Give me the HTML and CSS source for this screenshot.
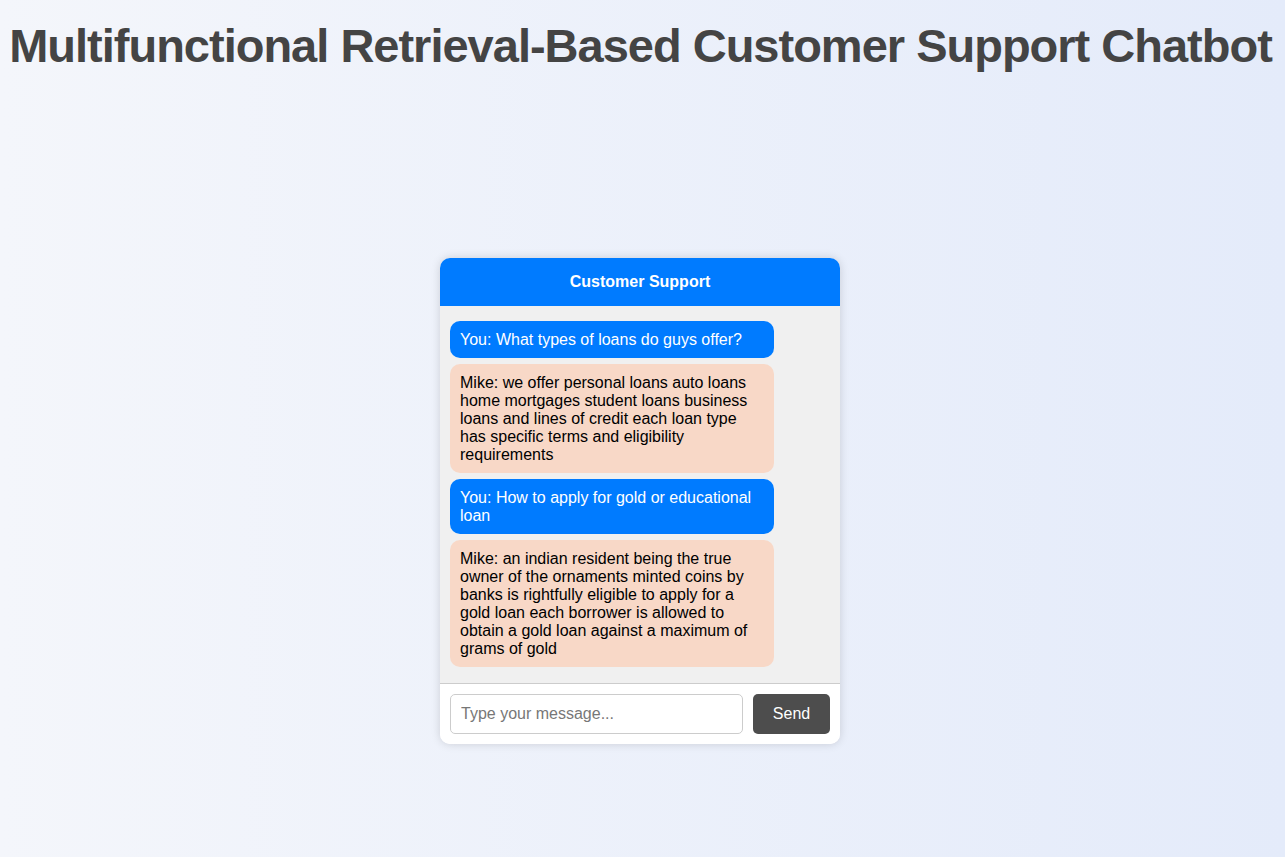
FILE: index.html
```html
<!DOCTYPE html>
<html lang="en">
<head>
<meta charset="utf-8">
<title>Customer Support Chatbot</title>
<link rel="stylesheet" href="styles.css">
</head>
<body>
<h1 class="page-title">Multifunctional Retrieval-Based Customer Support Chatbot</h1>
<main class="stage">
  <section class="chat">
    <header class="chat-header">Customer Support</header>
    <div class="chat-messages">
      <div class="msg msg-user">You: What types of loans do guys offer?</div>
      <div class="msg msg-bot">Mike: we offer personal loans auto loans home mortgages student loans business loans and lines of credit each loan type has specific terms and eligibility requirements</div>
      <div class="msg msg-user">You: How to apply for gold or educational loan</div>
      <div class="msg msg-bot">Mike: an indian resident being the true owner of the ornaments minted coins by banks is rightfully eligible to apply for a gold loan each borrower is allowed to obtain a gold loan against a maximum of grams of gold</div>
    </div>
    <form class="chat-input">
      <input class="chat-field" type="text" placeholder="Type your message...">
      <button class="chat-send" type="button">Send</button>
    </form>
  </section>
</main>
</body>
</html>
```

FILE: styles.css
```css
html, body {
  margin: 0;
  padding: 0;
}
body {
  min-height: 100vh;
  font-family: "Liberation Sans", Arial, sans-serif;
  background: linear-gradient(to right, #f4f6fb, #e4ebfa);
}
.page-title {
  margin: 18px 0 0;
  padding-right: 4px;
  text-align: center;
  white-space: nowrap;
  font-size: 47px;
  line-height: 55px;
  letter-spacing: -1px;
  font-weight: bold;
  color: #444;
}
.stage {
  display: flex;
  justify-content: center;
  padding-top: 185px;
  padding-right: 5px;
}
.chat {
  width: 400px;
  background: #fff;
  border-radius: 10px;
  box-shadow: 0 0 10px rgba(0, 0, 0, 0.15);
  overflow: hidden;
}
.chat-header {
  background: #007bff;
  color: #fff;
  height: 48px;
  display: flex;
  align-items: center;
  justify-content: center;
  font-weight: bold;
  font-size: 16px;
}
.chat-messages {
  background: #f0f0f0;
  padding: 15px 10px 16px;
  display: flex;
  flex-direction: column;
  gap: 6px;
  border-bottom: 1px solid #ccc;
}
.msg {
  max-width: 304px;
  padding: 9.5px 10px;
  border-radius: 10px;
  font-size: 16px;
  line-height: 18px;
}
.msg-user {
  background: #007bff;
  color: #fff;
}
.msg-bot {
  background: #f8d8c7;
  color: #000;
}
.chat-input {
  margin: 0;
  padding: 10px;
  display: flex;
  gap: 10px;
  background: #fff;
}
.chat-field {
  flex: 1;
  height: 40px;
  box-sizing: border-box;
  border: 1px solid #ccc;
  border-radius: 5px;
  padding: 0 10px;
  font-family: "Liberation Sans", Arial, sans-serif;
  font-size: 16px;
  color: #000;
}
.chat-field::placeholder {
  color: #777;
}
.chat-send {
  width: 77px;
  height: 40px;
  border: none;
  border-radius: 5px;
  background: #4d4d4d;
  color: #fff;
  font-family: "Liberation Sans", Arial, sans-serif;
  font-size: 16px;
}
```
